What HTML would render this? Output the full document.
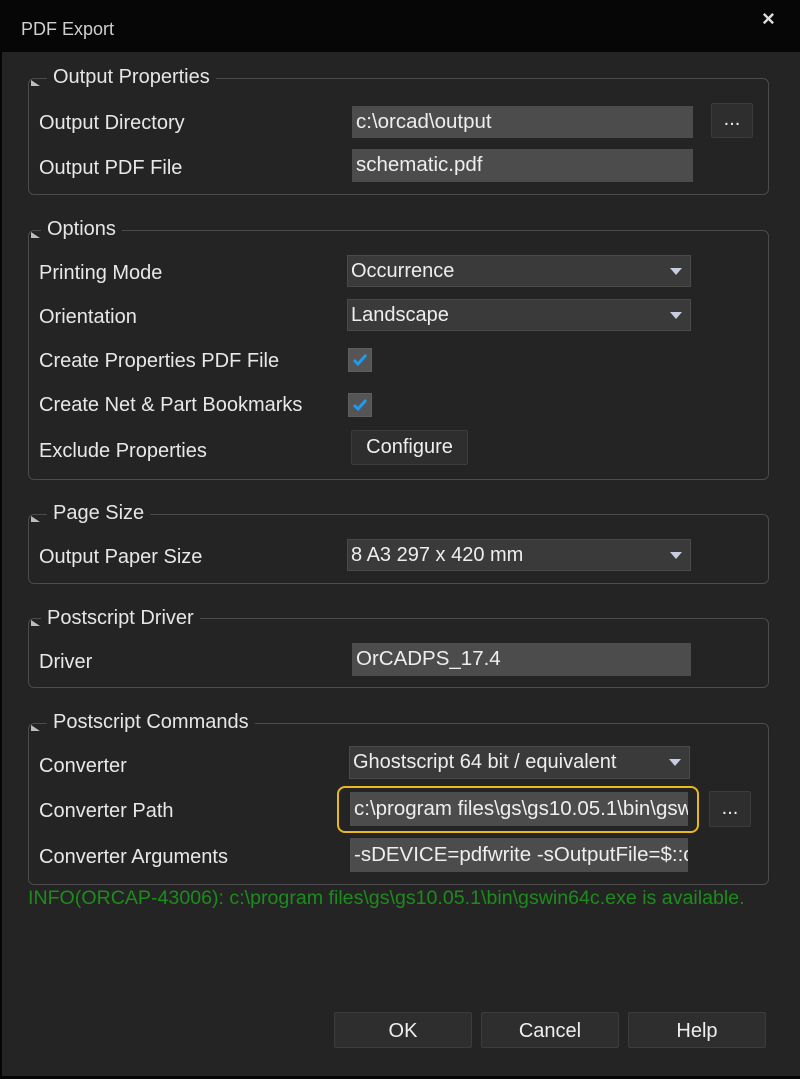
<!DOCTYPE html>
<html><head><meta charset="utf-8"><style>
*{box-sizing:border-box;margin:0;padding:0}
body{width:800px;height:1079px;background:#060606;font-family:"Liberation Sans",sans-serif;color:#e8e8e8;position:relative;overflow:hidden}
.a{position:absolute}
#main{left:2px;top:52px;width:798px;height:1024px;background:#232423}
.fs{position:absolute;border:1px solid #4a4b4a;border-radius:6px}
.lg{position:absolute;background:#232423;padding:0 6px;font-size:20px;line-height:22px;color:#e6e6e6;white-space:nowrap}
.tri{position:absolute;width:0;height:0;border-left:9px solid #bdbdbd;border-top:6px solid transparent}
.lb{position:absolute;left:39px;font-size:20px;line-height:22px;color:#e8e8e8;white-space:nowrap}
.in{position:absolute;background:#4c4c4c;font-size:20.5px;line-height:32px;padding-left:4px;color:#eee;white-space:nowrap;overflow:hidden}
.sel{position:absolute;background:#3a3a3a;border:1px solid #4a4a4a;font-size:20px;line-height:30px;padding-left:3px;color:#eee;white-space:nowrap}
.sel:after{content:"";position:absolute;right:8px;top:12px;border-left:6px solid transparent;border-right:6px solid transparent;border-top:7px solid #c8cce0}
.btn{position:absolute;background:#2e2e2e;border:1px solid #3c3c3c;border-radius:2px;text-align:center;font-size:20px;color:#eee}
.cb{position:absolute;width:24px;height:24px;background:#555;border:1px solid #5e5e5e}
</style></head><body>
<div class="a" style="left:21px;top:19px;font-size:18px;color:#cfcfcf">PDF Export</div>
<div class="a" style="left:762px;top:6px;font-size:22px;color:#ddd;font-weight:bold">×</div>
<div class="a" id="main"></div>

<div class="fs" style="left:28px;top:78px;width:741px;height:117px"></div>
<div class="tri" style="left:31px;top:80px"></div>
<div class="lg" style="left:47px;top:66px">Output Properties</div>
<div class="lb" style="top:112px">Output Directory</div>
<div class="in" style="left:352px;top:106px;width:341px">c:\orcad\output</div>
<div class="btn" style="left:711px;top:103px;width:42px;height:35px;line-height:30px">...</div>
<div class="lb" style="top:157px">Output PDF File</div>
<div class="in" style="left:352px;top:149px;width:341px;height:33px">schematic.pdf</div>

<div class="fs" style="left:28px;top:230px;width:741px;height:250px"></div>
<div class="tri" style="left:31px;top:232px"></div>
<div class="lg" style="left:41px;top:218px">Options</div>
<div class="lb" style="top:262px">Printing Mode</div>
<div class="sel" style="left:347px;top:255px;width:344px;height:32px">Occurrence</div>
<div class="lb" style="top:306px">Orientation</div>
<div class="sel" style="left:347px;top:299px;width:344px;height:32px">Landscape</div>
<div class="lb" style="top:350px">Create Properties PDF File</div>
<div class="cb" style="left:348px;top:348px"><svg width="22" height="22"><path d="M5 11 L9 15 L17 6" stroke="#1e9bf0" stroke-width="3" fill="none"/></svg></div>
<div class="lb" style="top:394px">Create Net &amp; Part Bookmarks</div>
<div class="cb" style="left:348px;top:393px"><svg width="22" height="22"><path d="M5 11 L9 15 L17 6" stroke="#1e9bf0" stroke-width="3" fill="none"/></svg></div>
<div class="lb" style="top:440px">Exclude Properties</div>
<div class="btn" style="left:351px;top:430px;width:117px;height:35px;line-height:33px">Configure</div>

<div class="fs" style="left:28px;top:514px;width:741px;height:70px"></div>
<div class="tri" style="left:31px;top:516px"></div>
<div class="lg" style="left:47px;top:502px">Page Size</div>
<div class="lb" style="top:546px">Output Paper Size</div>
<div class="sel" style="left:347px;top:539px;width:344px;height:32px">8 A3 297 x 420 mm</div>

<div class="fs" style="left:28px;top:618px;width:741px;height:70px"></div>
<div class="tri" style="left:31px;top:620px"></div>
<div class="lg" style="left:41px;top:607px">Postscript Driver</div>
<div class="lb" style="top:651px">Driver</div>
<div class="in" style="left:352px;top:643px;width:339px;height:33px">OrCADPS_17.4</div>

<div class="fs" style="left:28px;top:723px;width:741px;height:162px"></div>
<div class="tri" style="left:31px;top:725px"></div>
<div class="lg" style="left:47px;top:711px">Postscript Commands</div>
<div class="lb" style="top:755px">Converter</div>
<div class="sel" style="left:349px;top:746px;width:341px;height:33px">Ghostscript 64 bit / equivalent</div>
<div class="lb" style="top:800px">Converter Path</div>
<div class="a" style="left:337px;top:786px;width:362px;height:47px;border:2px solid #e8b820;border-radius:8px"></div>
<div class="in" style="left:350px;top:792px;width:338px;height:34px;line-height:34px">c:\program files\gs\gs10.05.1\bin\gswin64c.exe</div>
<div class="btn" style="left:709px;top:791px;width:42px;height:36px;line-height:32px">...</div>
<div class="lb" style="top:846px">Converter Arguments</div>
<div class="in" style="left:350px;top:838px;width:338px;height:34px;line-height:34px">-sDEVICE=pdfwrite -sOutputFile=$::capture</div>
<div class="a" style="left:28px;top:887px;font-size:19.6px;color:#1d8c1d;white-space:nowrap">INFO(ORCAP-43006): c:\program files\gs\gs10.05.1\bin\gswin64c.exe is available.</div>

<div class="btn" style="left:334px;top:1012px;width:138px;height:36px;line-height:36px">OK</div>
<div class="btn" style="left:481px;top:1012px;width:138px;height:36px;line-height:36px">Cancel</div>
<div class="btn" style="left:628px;top:1012px;width:138px;height:36px;line-height:36px">Help</div>
</body></html>
